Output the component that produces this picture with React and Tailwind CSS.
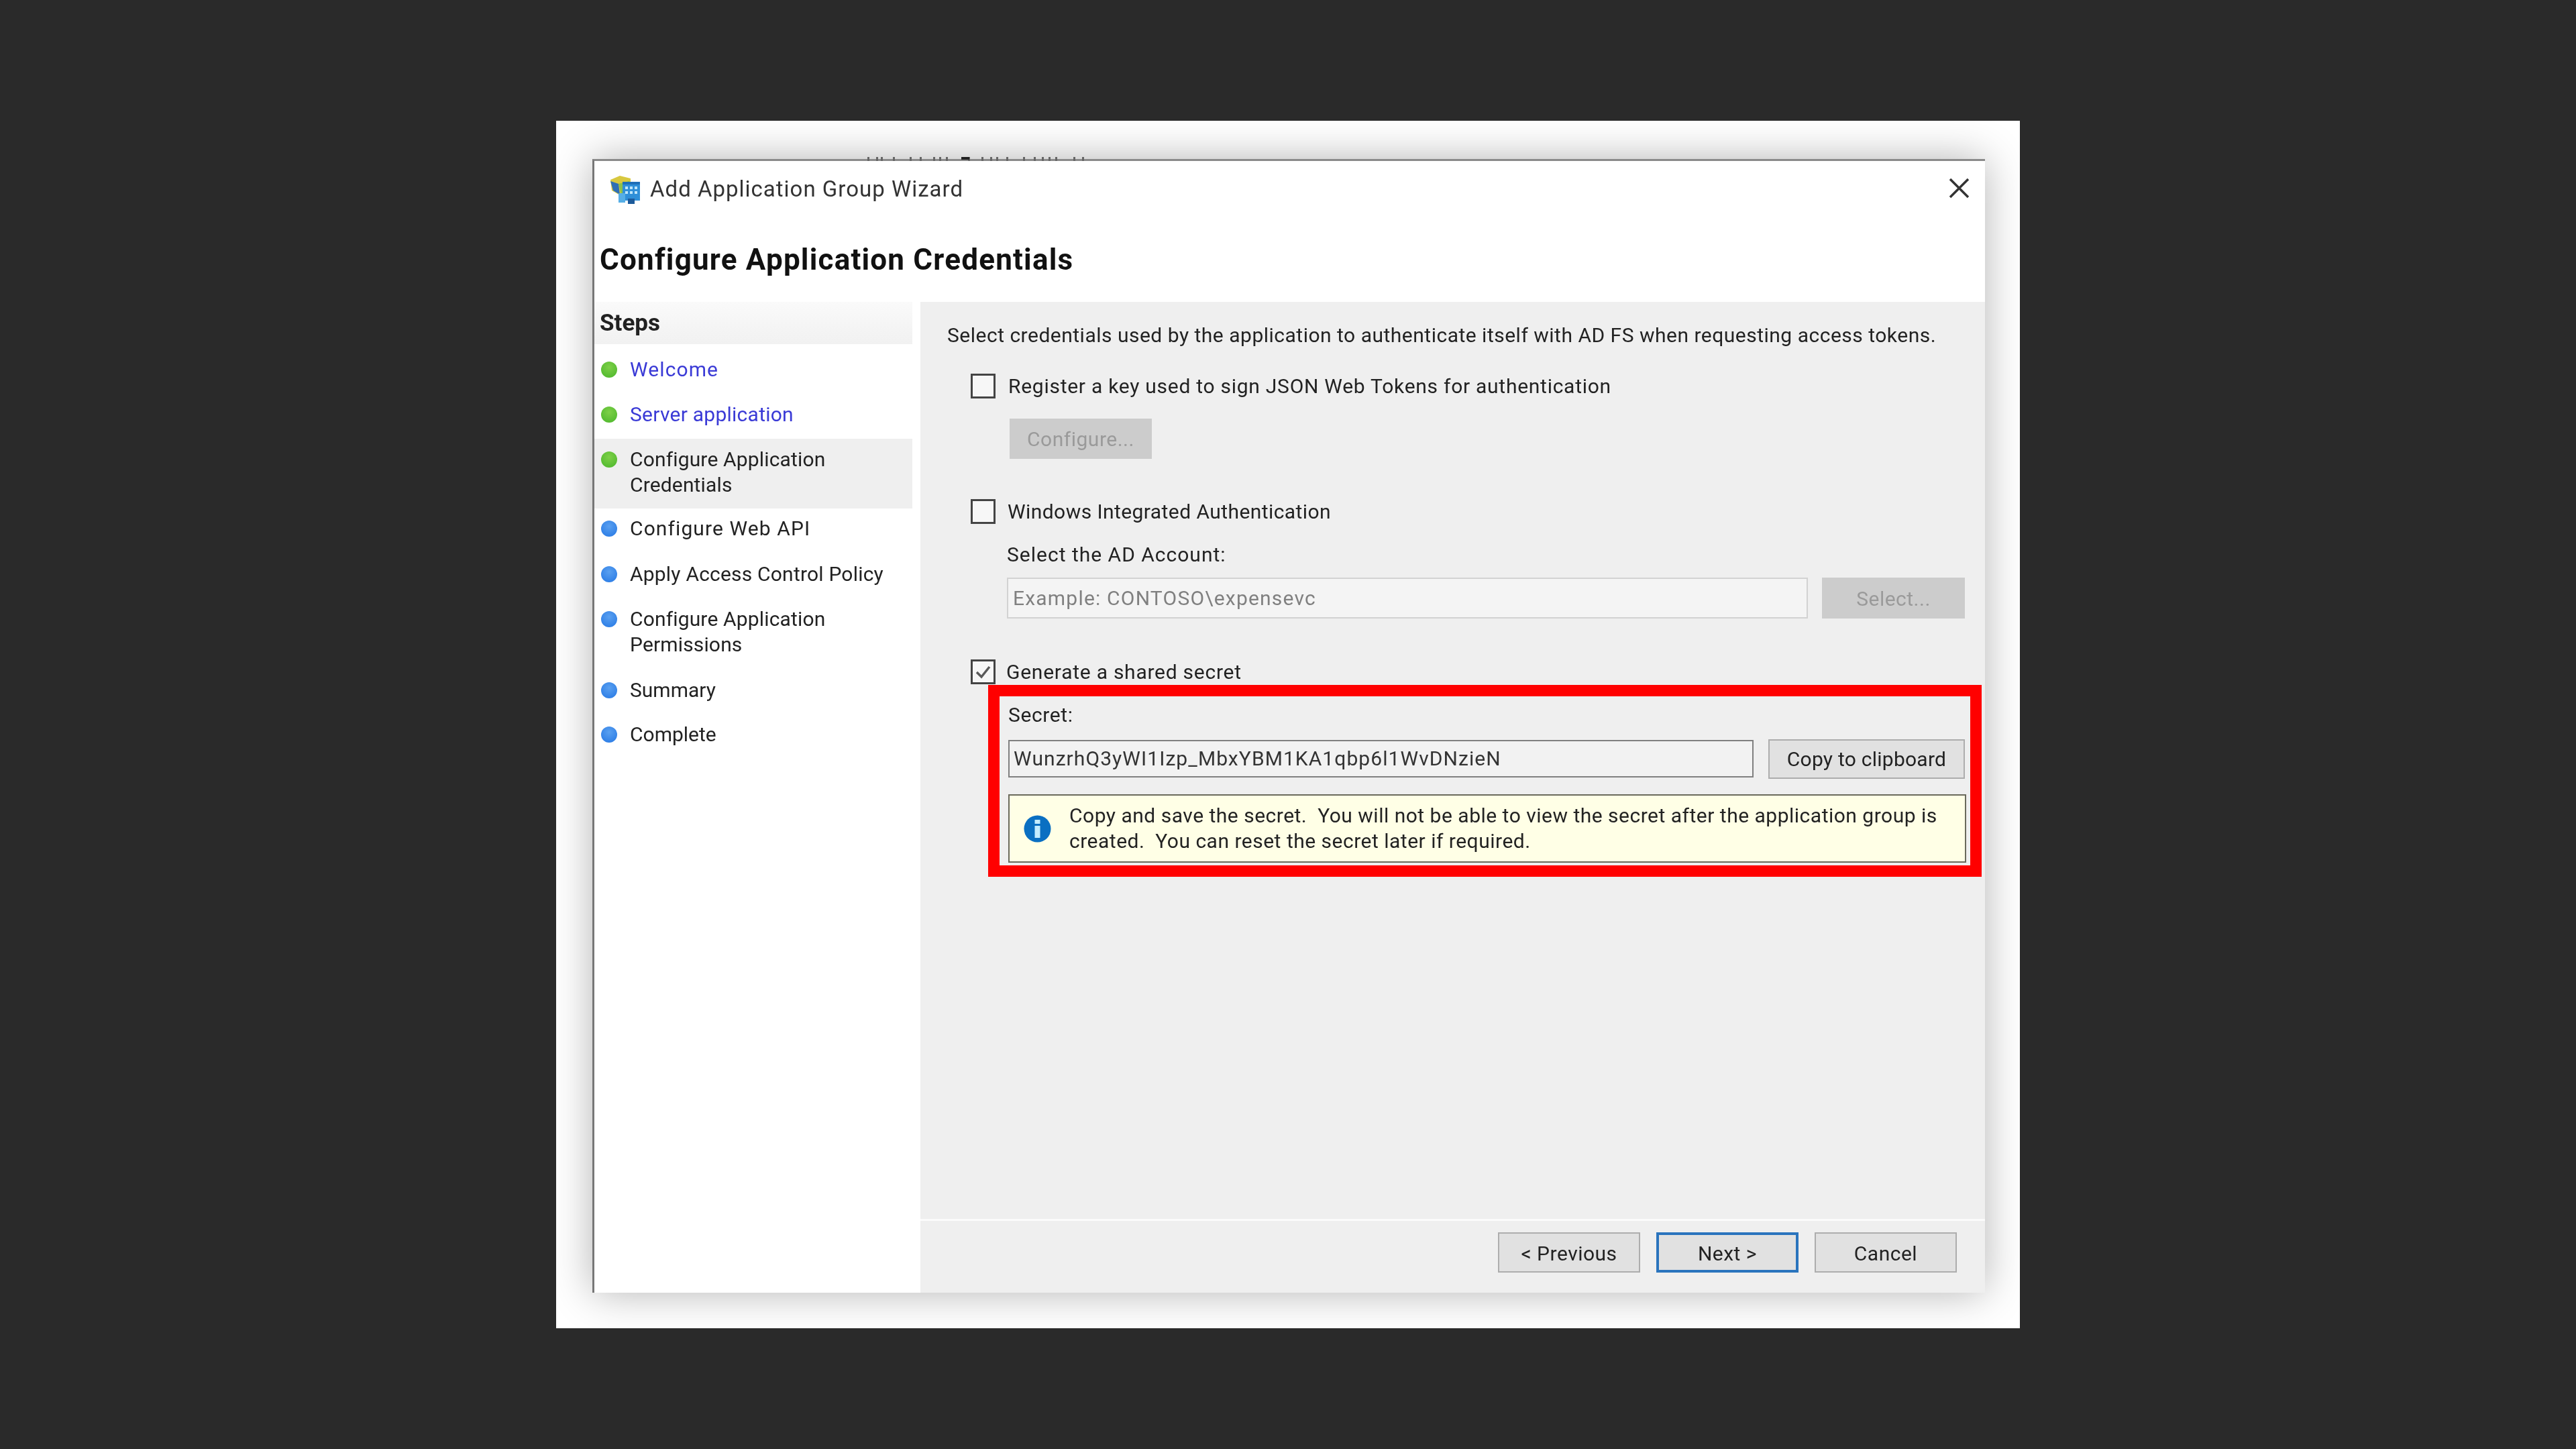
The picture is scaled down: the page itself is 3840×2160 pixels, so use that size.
const STEPS = [
  { label: ["Welcome"], dot: "g", link: true, box: "h-[67px] items-center tracking-[1.1px]" },
  { label: ["Server application"], dot: "g", link: true, box: "h-[70px] pb-[2px] items-center tracking-[0.25px]" },
  { label: ["Configure Application", "Credentials"], dot: "g", active: true, box: "h-[104px] pt-[12px] items-start tracking-[0.15px]" },
  { label: ["Configure Web API"], dot: "b", box: "h-[60px] items-center tracking-[1.1px]" },
  { label: ["Apply Access Control Policy"], dot: "b", box: "h-[76px] items-center tracking-[0.2px]" },
  { label: ["Configure Application", "Permissions"], dot: "b", box: "h-[101px] pt-[10px] items-start tracking-[0.15px]" },
  { label: ["Summary"], dot: "b", box: "h-[67px] items-center" },
  { label: ["Complete"], dot: "b", box: "h-[66px] items-center" },
];

const TICKS = [30, 43, 50, 68, 93, 108, 128, 137, 147, 180, 200, 213, 222, 237, 262, 278, 290, 300, 310, 337, 350];

function Dot({ kind }) {
  return (
    <span
      className={
        "block w-[24px] h-[24px] rounded-full shrink-0 " +
        (kind === "g"
          ? "bg-[radial-gradient(circle_at_50%_35%,#7ed048,#49b52a)]"
          : "bg-[radial-gradient(circle_at_50%_35%,#5aa0f0,#2477e4)]")
      }
    />
  );
}

function Check({ checked }) {
  return (
    <span className="block w-[37px] h-[37px] border-[3px] border-[#444444] bg-[#f7f7f7] shrink-0">
      {checked && (
        <svg viewBox="0 0 31 31" className="w-full h-full">
          <path d="M6 16 L13 23 L25 8" fill="none" stroke="#5a5a5a" strokeWidth="3.5" />
        </svg>
      )}
    </span>
  );
}

function Btn({ children, primary }) {
  return (
    <div
      className={
        "w-[212px] h-[60px] pt-[3px] flex items-center justify-center bg-[#e1e1e1] text-[#222222] " +
        (primary ? "border-[4px] border-[#2a74bd]" : "border-2 border-[#adadad]")
      }
    >
      {children}
    </div>
  );
}

function WizardIcon() {
  return (
    <svg viewBox="0 0 47 45" className="w-[47px] h-[45px] shrink-0">
      <path d="M2 8 L16 2 L32 6 L32 24 L18 32 L4 24 Z" fill="#d8c83f" />
      <path d="M2 10 L14 14 L16 30 L6 24 Z" fill="#2f6fb5" />
      <path d="M14 14 L30 10 L30 20 L18 30 Z" fill="#8cc04a" />
      <rect x="20" y="11" width="26" height="28" fill="#2f8fd8" />
      <rect x="20" y="11" width="26" height="4" fill="#1f6fb8" />
      <rect x="24" y="18" width="4" height="4" fill="#bfe6fa" />
      <rect x="31" y="18" width="4" height="4" fill="#bfe6fa" />
      <rect x="38" y="18" width="4" height="4" fill="#bfe6fa" />
      <rect x="24" y="25" width="4" height="4" fill="#bfe6fa" />
      <rect x="31" y="25" width="4" height="4" fill="#bfe6fa" />
      <rect x="38" y="25" width="4" height="4" fill="#bfe6fa" />
      <rect x="14" y="28" width="10" height="14" fill="#55aee6" />
      <rect x="28" y="36" width="10" height="8" fill="#1c5a9a" />
    </svg>
  );
}

export default function App() {
  return (
    <div className="w-[3840px] h-[2160px] bg-[#2a2a2a] flex items-center justify-center [font-family:Roboto,sans-serif] text-[30px] leading-[38px] text-[#222222]">
      <div className="w-[2182px] h-[1800px] bg-white pt-[57px] pl-[54px] blur-[0.7px] overflow-hidden">
        <div className="relative w-[2076px] h-[1690px] bg-white border-t-[3px] border-l-[3px] border-t-[#8a8a8a] border-l-[#777777] shadow-[0_0_58px_rgba(0,0,0,0.3)] flex flex-col">
          <svg className="absolute left-[397px] top-[-6px] w-[360px] h-[8px]" viewBox="0 0 360 8">
            {TICKS.map((x) => (
              <rect key={x} x={x - 20} y="0" width="3" height="6" fill="#666666" />
            ))}
            <rect x="150" y="0" width="12" height="4" fill="#222222" />
          </svg>

          <div className="h-[84px] flex items-center pl-[22px] pr-[23px] shrink-0">
            <WizardIcon />
            <span className="ml-[14px] text-[33px] text-[#333333] tracking-[1px]">Add Application Group Wizard</span>
            <svg viewBox="0 0 31 31" className="ml-auto mb-[4px] w-[31px] h-[31px]">
              <path d="M2 2 L29 29 M29 2 L2 29" stroke="#333333" strokeWidth="3.5" />
            </svg>
          </div>

          <div className="h-[126px] pt-[38px] pl-[8px] shrink-0">
            <h1 className="text-[44px] leading-[50px] font-bold text-[#111111] tracking-[1.2px]">Configure Application Credentials</h1>
          </div>

          <div className="flex flex-1 min-h-0">
            <div className="w-[486px] shrink-0 pr-[12px]">
              <div className="h-[63px] bg-[linear-gradient(#fafafa,#f1f1f1)] flex items-center pl-[8px] text-[35px] font-bold text-[#222222]">
                Steps
              </div>
              <div className="pt-[4px]">
                {STEPS.map((s) => (
                  <div
                    key={s.label[0] + s.dot}
                    className={
                      "flex pl-[10px] gap-[19px] " +
                      s.box +
                      (s.active ? " bg-[#efefef]" : "") +
                      (s.link ? " text-[#3a3ad6]" : "")
                    }
                  >
                    <span className={s.label.length > 1 ? "pt-[7px]" : ""}>
                      <Dot kind={s.dot} />
                    </span>
                    <div>
                      {s.label.map((l) => (
                        <div key={l}>{l}</div>
                      ))}
                    </div>
                  </div>
                ))}
              </div>
            </div>

            <div className="flex-1 bg-[#efefef] flex flex-col">
              <p className="mt-[31px] ml-[40px] tracking-[0.5px]">Select credentials used by the application to authenticate itself with AD FS when requesting access tokens.</p>

              <div className="mt-[38px] ml-[75px] h-[37px] flex items-center gap-[19px]">
                <Check />
                <span className="tracking-[0.73px]">Register a key used to sign JSON Web Tokens for authentication</span>
              </div>
              <div className="mt-[30px] ml-[133px] w-[212px] h-[60px] pt-[2px] bg-[#cccccc] text-[#9a9a9a] tracking-[0.5px] flex items-center justify-center">Configure...</div>

              <div className="mt-[60px] ml-[75px] h-[37px] flex items-center gap-[18px]">
                <Check />
                <span className="tracking-[0.43px]">Windows Integrated Authentication</span>
              </div>
              <div className="mt-[27px] ml-[129px] tracking-[1px]">Select the AD Account:</div>
              <div className="mt-[15px] ml-[129px] flex gap-[21px] h-[61px]">
                <div className="w-[1194px] bg-[#f4f4f4] border-2 border-[#d2d2d2] flex items-center pl-[7px] text-[#808080] tracking-[1.2px]">Example: CONTOSO\expensevc</div>
                <div className="w-[213px] pt-[2px] bg-[#cccccc] text-[#9a9a9a] tracking-[0.5px] flex items-center justify-center">Select...</div>
              </div>

              <div className="mt-[61px] ml-[75px] h-[37px] flex items-center gap-[16px]">
                <Check checked />
                <span className="tracking-[0.75px]">Generate a shared secret</span>
              </div>

              <div className="mt-[1px] ml-[101px] w-[1481px] h-[286px] border-[17px] border-[#ff0000] pl-[13px] shrink-0">
                <div className="mt-[9px] tracking-[0.6px]">Secret:</div>
                <div className="mt-[17px] flex gap-[22px] items-start h-[59px]">
                  <div className="mt-[1px] w-[1111px] h-[56px] border-2 border-[#808080] bg-[#f2f2f2] flex items-center pl-[6px] text-[#333333] tracking-[1.07px]">WunzrhQ3yWI1Izp_MbxYBM1KA1qbp6l1WvDNzieN</div>
                  <div className="w-[293px] h-[59px] bg-[#e1e1e1] border-2 border-[#adadad] flex items-center justify-center tracking-[0.25px]">Copy to clipboard</div>
                </div>
                <div className="mt-[23px] w-[1428px] h-[102px] bg-[#ffffe6] border-2 border-[#6a6a5c] flex items-center pl-[21px] gap-[27px] tracking-[0.5px]">
                  <svg viewBox="0 0 41 41" className="w-[41px] h-[41px] shrink-0">
                    <circle cx="20.5" cy="20.5" r="20" fill="#0a6fc2" />
                    <rect x="16.5" y="16" width="8" height="18" fill="#c4ecff" />
                    <rect x="16.5" y="7" width="8" height="6" fill="#c4ecff" />
                  </svg>
                  <div>
                    <div className="whitespace-pre">Copy and save the secret.  You will not be able to view the secret after the application group is</div>
                    <div className="whitespace-pre">created.  You can reset the secret later if required.</div>
                  </div>
                </div>
              </div>

              <div className="mt-auto h-[110px] border-t-[3px] border-[#fbfbfb] pt-[17px] pr-[42px] flex justify-end gap-[24px] tracking-[0.5px]">
                <Btn>&lt; Previous</Btn>
                <Btn primary>Next &gt;</Btn>
                <Btn>Cancel</Btn>
              </div>
            </div>
          </div>
        </div>
      </div>
    </div>
  );
}
